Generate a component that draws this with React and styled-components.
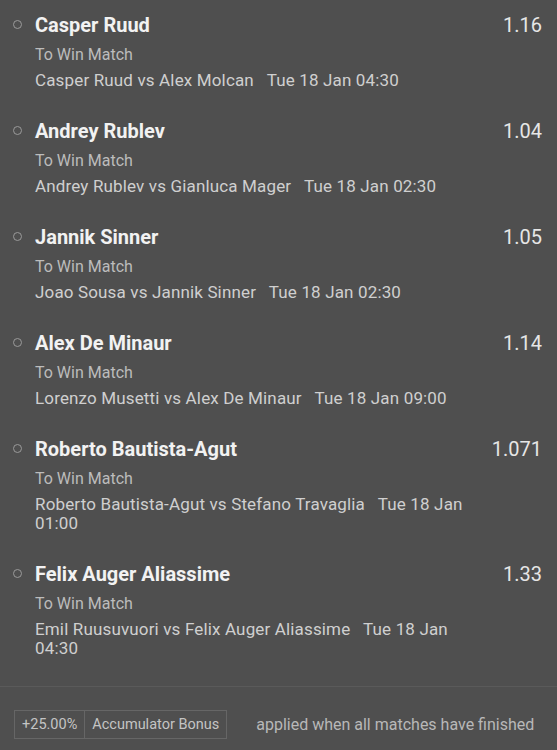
import styled, { createGlobalStyle } from "styled-components";

const GlobalStyle = createGlobalStyle`
  html, body {
    margin: 0;
    padding: 0;
    background: #4f4f4f;
  }
  body {
    font-family: Roboto, "Liberation Sans", sans-serif;
  }
`;

const Page = styled.div`
  width: 557px;
  min-height: 750px;
  background: #4f4f4f;
  display: flex;
  flex-direction: column;
`;

const List = styled.div`
  display: flex;
  flex-direction: column;
  padding-top: 12px;
`;

const Bet = styled.div`
  display: flex;
  align-items: flex-start;
  padding: 0 15px 28px 13px;
`;

const Radio = styled.span`
  flex: none;
  width: 7px;
  height: 7px;
  border: 1.5px solid #9a9a9a;
  border-radius: 50%;
  margin-top: 8px;
  margin-right: 13px;
`;

const Info = styled.div`
  flex: 1;
  display: flex;
  flex-direction: column;
  max-width: 440px;
`;

const Selection = styled.div`
  font-size: 20px;
  font-weight: 700;
  color: #f2f2f2;
  line-height: 26px;
`;

const Market = styled.div`
  font-size: 16px;
  color: #bcbcbc;
  line-height: 20px;
  margin-top: 7px;
`;

const Event = styled.div`
  font-size: 17px;
  letter-spacing: 0.15px;
  color: #cfcfcf;
  line-height: 19px;
  margin-top: 6px;
  white-space: pre-wrap;
`;

const Odds = styled.div`
  margin-left: auto;
  font-size: 20px;
  color: #e6e6e6;
  line-height: 26px;
`;

const Footer = styled.div`
  margin-top: auto;
  border-top: 1px solid #5a5a5a;
  display: flex;
  align-items: center;
  padding: 23px 14px 15px;
`;

const Badge = styled.div`
  display: flex;
  border: 1px solid #666;
  height: 27px;
`;

const BadgeCell = styled.span`
  display: flex;
  align-items: center;
  padding: 0 7px;
  font-size: 14.5px;
  color: #c4c4c4;
  & + & {
    border-left: 1px solid #666;
  }
`;

const Note = styled.span`
  margin-left: 29px;
  font-size: 16px;
  color: #b8b8b8;
`;

const bets = [
  { name: "Casper Ruud", event: "Casper Ruud vs Alex Molcan", when: "Tue 18 Jan 04:30", odds: "1.16" },
  { name: "Andrey Rublev", event: "Andrey Rublev vs Gianluca Mager", when: "Tue 18 Jan 02:30", odds: "1.04" },
  { name: "Jannik Sinner", event: "Joao Sousa vs Jannik Sinner", when: "Tue 18 Jan 02:30", odds: "1.05" },
  { name: "Alex De Minaur", event: "Lorenzo Musetti vs Alex De Minaur", when: "Tue 18 Jan 09:00", odds: "1.14" },
  { name: "Roberto Bautista-Agut", event: "Roberto Bautista-Agut vs Stefano Travaglia", when: "Tue 18 Jan 01:00", odds: "1.071" },
  { name: "Felix Auger Aliassime", event: "Emil Ruusuvuori vs Felix Auger Aliassime", when: "Tue 18 Jan 04:30", odds: "1.33" },
];

export default function App() {
  return (
    <Page>
      <GlobalStyle />
      <List>
        {bets.map((b) => (
          <Bet key={b.name}>
            <Radio />
            <Info>
              <Selection>{b.name}</Selection>
              <Market>To Win Match</Market>
              <Event>{`${b.event}   ${b.when}`}</Event>
            </Info>
            <Odds>{b.odds}</Odds>
          </Bet>
        ))}
      </List>
      <Footer>
        <Badge>
          <BadgeCell>+25.00%</BadgeCell>
          <BadgeCell>Accumulator Bonus</BadgeCell>
        </Badge>
        <Note>applied when all matches have finished</Note>
      </Footer>
    </Page>
  );
}
